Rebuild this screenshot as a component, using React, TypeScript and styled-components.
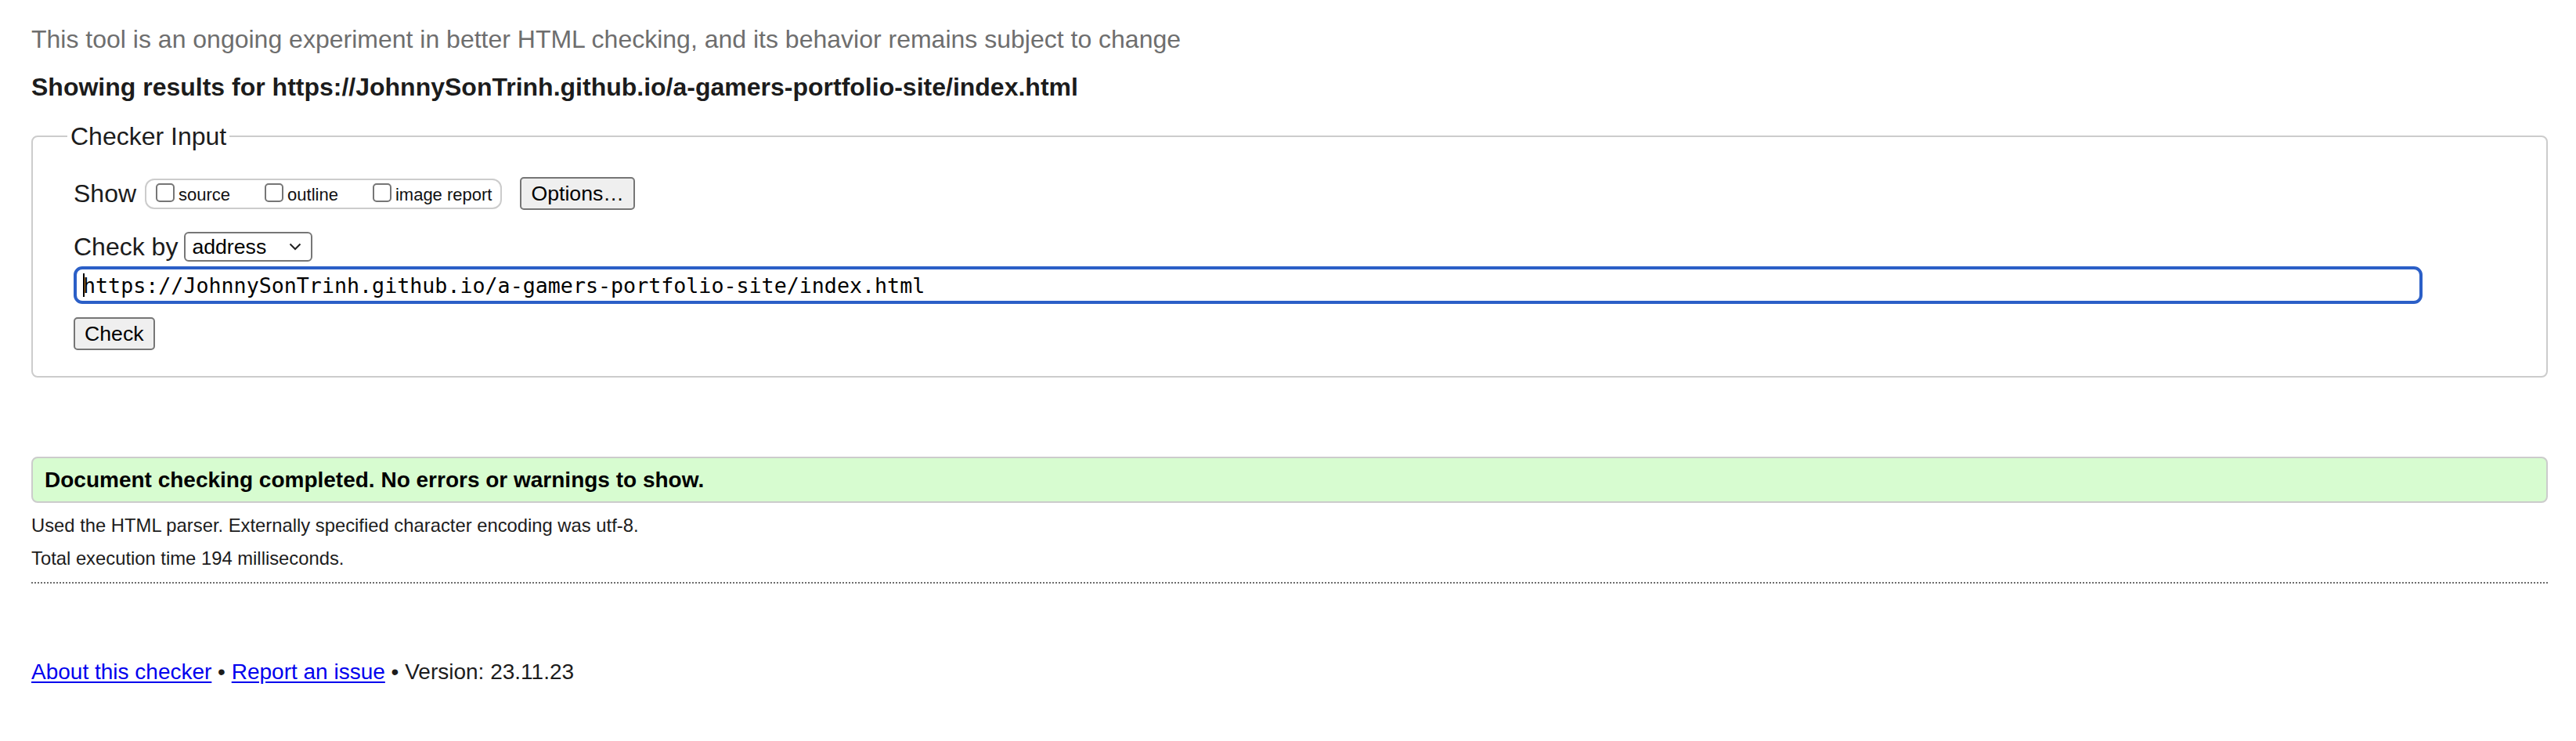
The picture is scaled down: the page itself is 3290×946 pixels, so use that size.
import { FC } from "react";
import styled, { createGlobalStyle } from "styled-components";

const GlobalStyle = createGlobalStyle`
  html, body {
    margin: 0;
    padding: 0;
    background: #fff;
  }
  body {
    font-family: "Liberation Sans", Arial, Helvetica, sans-serif;
    color: #222;
  }
`;

const Page = styled.div`
  display: flex;
  flex-direction: column;
  padding: 32px 36px 60px 40px;
`;

const Intro = styled.p`
  margin: 0;
  font-size: 32px;
  line-height: 37px;
  color: #6e6e6e;
`;

const Heading = styled.h2`
  margin: 24px 0 0;
  font-size: 32px;
  line-height: 37px;
  font-weight: bold;
  color: #1c1c1c;
`;

const Fieldset = styled.fieldset`
  margin: 26px 0 0;
  padding: 0 52px 33px 52px;
  border: 2px solid #cccccc;
  border-radius: 8px;
  display: flex;
  flex-direction: column;
  align-items: flex-start;
`;

const Legend = styled.legend`
  font-size: 32px;
  line-height: 36px;
  padding: 0 4px;
  margin-left: -8px;
  color: #1c1c1c;
`;

const Row = styled.div<{ $top: number; $gap: number }>`
  display: flex;
  align-items: center;
  gap: ${(p) => p.$gap}px;
  margin-top: ${(p) => p.$top}px;
`;

const Label = styled.span`
  font-size: 32px;
  line-height: 37px;
  color: #1c1c1c;
`;

const OptionGroup = styled.div`
  display: flex;
  align-items: flex-end;
  height: 35px;
  padding: 0 11px 0 12px;
  border: 2px solid #cccccc;
  border-radius: 12px;
`;

const Option = styled.label<{ $last?: boolean }>`
  display: flex;
  align-items: flex-end;
  gap: 5px;
  margin-right: ${(p) => (p.$last ? 0 : 44)}px;
  padding-bottom: 5px;
  font-size: 22px;
  line-height: 22px;
  color: #111;
`;

const Box = styled.input`
  appearance: none;
  margin: 0 0 2px 0;
  width: 24px;
  height: 24px;
  border: 2px solid #767676;
  border-radius: 5px;
  background: #fff;
  box-sizing: border-box;
`;

const Button = styled.button`
  height: 42px;
  padding: 0 12px;
  border: 2px solid #767676;
  border-radius: 5px;
  background: #efefef;
  font-family: "Liberation Sans", Arial, sans-serif;
  font-size: 26.67px;
  color: #000;
`;

const OptionsButton = styled(Button)`
  margin-left: 12px;
`;

const SelectWrap = styled.div`
  position: relative;
  display: flex;
`;

const Select = styled.select`
  appearance: none;
  width: 164px;
  height: 38px;
  padding: 0 0 0 8px;
  border: 2px solid #767676;
  border-radius: 6px;
  background: #fff;
  font-family: "Liberation Sans", Arial, sans-serif;
  font-size: 26.67px;
  color: #000;
`;

const Chevron = styled.svg`
  position: absolute;
  right: 14px;
  top: 14px;
  pointer-events: none;
`;

const UrlField = styled.div`
  display: flex;
  align-items: center;
  box-sizing: border-box;
  width: calc(100% - 106px);
  height: 48px;
  margin-top: 6px;
  padding: 0 8px;
  border: 4px solid #2b5fc7;
  border-radius: 11px;
  font-family: "DejaVu Sans Mono", "Liberation Mono", monospace;
  font-size: 26.67px;
  color: #000;
  white-space: nowrap;
`;

const Caret = styled.span`
  display: inline-block;
  width: 2px;
  height: 30px;
  background: #000;
  margin-right: -2px;
`;

const CheckButton = styled(Button)`
  margin-top: 17px;
`;

const Success = styled.div`
  margin-top: 101px;
  height: 55px;
  padding: 0 15px;
  border: 2px solid #cccccc;
  border-radius: 8px;
  background: #d7fcd0;
  font-size: 28px;
  font-weight: bold;
  line-height: 55px;
  color: #000;
`;

const Detail = styled.p<{ $top: number }>`
  margin: ${(p) => p.$top}px 0 0;
  font-size: 23.8px;
  line-height: 28px;
  color: #1c1c1c;
`;

const Rule = styled.hr`
  width: 100%;
  margin: 16px 0 0;
  border: 0;
  border-top: 2px dotted #6e6e6e;
`;

const Footer = styled.p`
  margin: 97px 0 0;
  font-size: 28px;
  line-height: 32px;
  color: #1c1c1c;

  a {
    color: #0000ee;
    text-decoration: underline;
    text-underline-offset: 3px;
  }
`;

const options = ["source", "outline", "image report"];

const App: FC = () => {
  return (
    <Page>
      <GlobalStyle />
      <Intro>
        This tool is an ongoing experiment in better HTML checking, and its
        behavior remains subject to change
      </Intro>
      <Heading>
        Showing results for
        https://JohnnySonTrinh.github.io/a-gamers-portfolio-site/index.html
      </Heading>
      <Fieldset>
        <Legend>Checker Input</Legend>
        <Row $top={34} $gap={11}>
          <Label>Show</Label>
          <OptionGroup>
            {options.map((o, i) => (
              <Option key={o} $last={i === options.length - 1}>
                <Box type="checkbox" />
                {o}
              </Option>
            ))}
          </OptionGroup>
          <OptionsButton>Options…</OptionsButton>
        </Row>
        <Row $top={28} $gap={8}>
          <Label>Check by</Label>
          <SelectWrap>
            <Select defaultValue="address">
              <option value="address">address</option>
              <option value="file">file upload</option>
              <option value="text">text input</option>
            </Select>
            <Chevron width="16" height="10" viewBox="0 0 16 10">
              <path d="M1.5 1.5 L8 8 L14.5 1.5" fill="none" stroke="#222" strokeWidth="2" />
            </Chevron>
          </SelectWrap>
        </Row>
        <UrlField>
          <Caret />
          https://JohnnySonTrinh.github.io/a-gamers-portfolio-site/index.html
        </UrlField>
        <CheckButton>Check</CheckButton>
      </Fieldset>
      <Success>Document checking completed. No errors or warnings to show.</Success>
      <Detail $top={15}>
        Used the HTML parser. Externally specified character encoding was utf-8.
      </Detail>
      <Detail $top={14}>Total execution time 194 milliseconds.</Detail>
      <Rule />
      <Footer>
        <a href="#about">About this checker</a> • <a href="#issue">Report an issue</a> •
        Version: 23.11.23
      </Footer>
    </Page>
  );
};

export default App;
